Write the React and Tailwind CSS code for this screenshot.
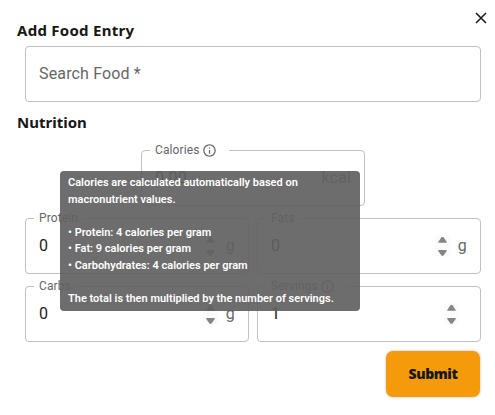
import React from "react";

function InfoIcon() {
  return (
    <svg viewBox="0 0 24 24" className="ml-[2px] mr-[7px] h-[15px] w-[15px] shrink-0" fill="currentColor">
      <path d="M11 7h2v2h-2zm0 4h2v6h-2zm1-9C6.48 2 2 6.48 2 12s4.48 10 10 10 10-4.48 10-10S17.52 2 12 2m0 18c-4.41 0-8-3.59-8-8s3.59-8 8-8 8 3.59 8 8-3.59 8-8 8" />
    </svg>
  );
}

function Spinner() {
  return (
    <svg viewBox="0 0 15 22" className="h-[22px] w-[15px] shrink-0">
      <path d="M0 0h15v22H0z" fill="#fbfbfb" />
      <path d="M3.3 7.8V6.9L6.6 2.1h1.8l3.3 4.8v.9zM3.3 15v.9l3.3 4.8h1.8l3.3-4.8V15z" fill="#858585" />
    </svg>
  );
}

function Field({ label, value, unit, info, spinner = true }) {
  return (
    <fieldset className="-mt-[5px] h-[61px] w-[224px] min-w-0 rounded-[4px] border border-[#c0c0c0] px-2">
      <legend className="flex h-[11px] items-center whitespace-nowrap px-[5px] text-[12px] leading-[11px] tracking-[0.11px] text-[#666]">
        {label}
        {info && <InfoIcon />}
      </legend>
      <div className="flex h-[49px] items-center px-[5px] pb-[6px]">
        <span className="flex-1 text-[16px] leading-[23px] tracking-[0.15px] text-[#212121]">{value}</span>
        {spinner && <Spinner />}
        {unit ? (
          <span className="ml-2 text-[16px] leading-[23px] tracking-[0.15px] text-[#666]">{unit}</span>
        ) : (
          <span className="w-2" />
        )}
      </div>
    </fieldset>
  );
}

export default function App() {
  return (
    <div className="relative h-[415px] w-[495px] overflow-hidden bg-white font-['Roboto',sans-serif]">
      <header className="flex h-[46px] justify-between pl-[17px] pr-[8px]">
        <h2 className="pt-5 font-['Noto_Sans',sans-serif] text-[15px] font-bold leading-[20px] tracking-[0.27px] text-[#171717]">Add Food Entry</h2>
        <button className="mt-[12px] h-3 w-3" aria-label="Close">
          <svg viewBox="0 0 12 12" className="h-3 w-3" fill="none" stroke="#171717" strokeWidth="1.5">
            <path d="M1 1l10 10M11 1L1 11" />
          </svg>
        </button>
      </header>

      <div className="ml-[25px] flex h-14 w-[456px] items-center rounded-[4px] border border-[#c0c0c0] px-[13px] pb-px text-[16px] tracking-[0.15px] text-[#666]">
        Search Food *
      </div>

      <h2 className="ml-[17px] mt-[10px] h-[38px] font-['Noto_Sans',sans-serif] text-[15px] font-bold leading-[20px] text-[#171717]">Nutrition</h2>

      <div className="ml-[25px] flex w-[456px] flex-col gap-3">
        <div className="flex justify-center">
          <Field label="Calories" value="0.00" unit="kcal" info spinner={false} />
        </div>
        <div className="flex gap-2">
          <Field label="Protein" value="0" unit="g" />
          <Field label="Fats" value="0" unit="g" />
        </div>
        <div className="flex gap-2">
          <Field label="Carbs" value="0" unit="g" />
          <Field label="Servings" value="1" info />
        </div>
      </div>

      <div className="mt-[9px] flex justify-end pr-[15px]">
        <button className="h-[46px] w-[94px] rounded-[7px] bg-[#f59b0b] pb-px font-['Noto_Sans',sans-serif] text-[14px] font-black tracking-[-0.4px] text-[#171717] shadow-[0_0_2px_1px_rgba(0,0,0,0.13)]">
          Submit
        </button>
      </div>

      <div className="absolute left-[60px] top-[171px] h-[140px] w-[300px] whitespace-nowrap rounded-[4px] bg-[#616161]/92 px-2 py-1 text-[11px] font-semibold leading-[16.5px] text-white">
        <p>Calories are calculated automatically based on</p>
        <p>macronutrient values.</p>
        <ul className="mt-[16.5px]">
          <li>• Protein: 4 calories per gram</li>
          <li>• Fat: 9 calories per gram</li>
          <li>• Carbohydrates: 4 calories per gram</li>
        </ul>
        <p className="mt-[16.5px]">The total is then multiplied by the number of servings.</p>
      </div>
    </div>
  );
}
